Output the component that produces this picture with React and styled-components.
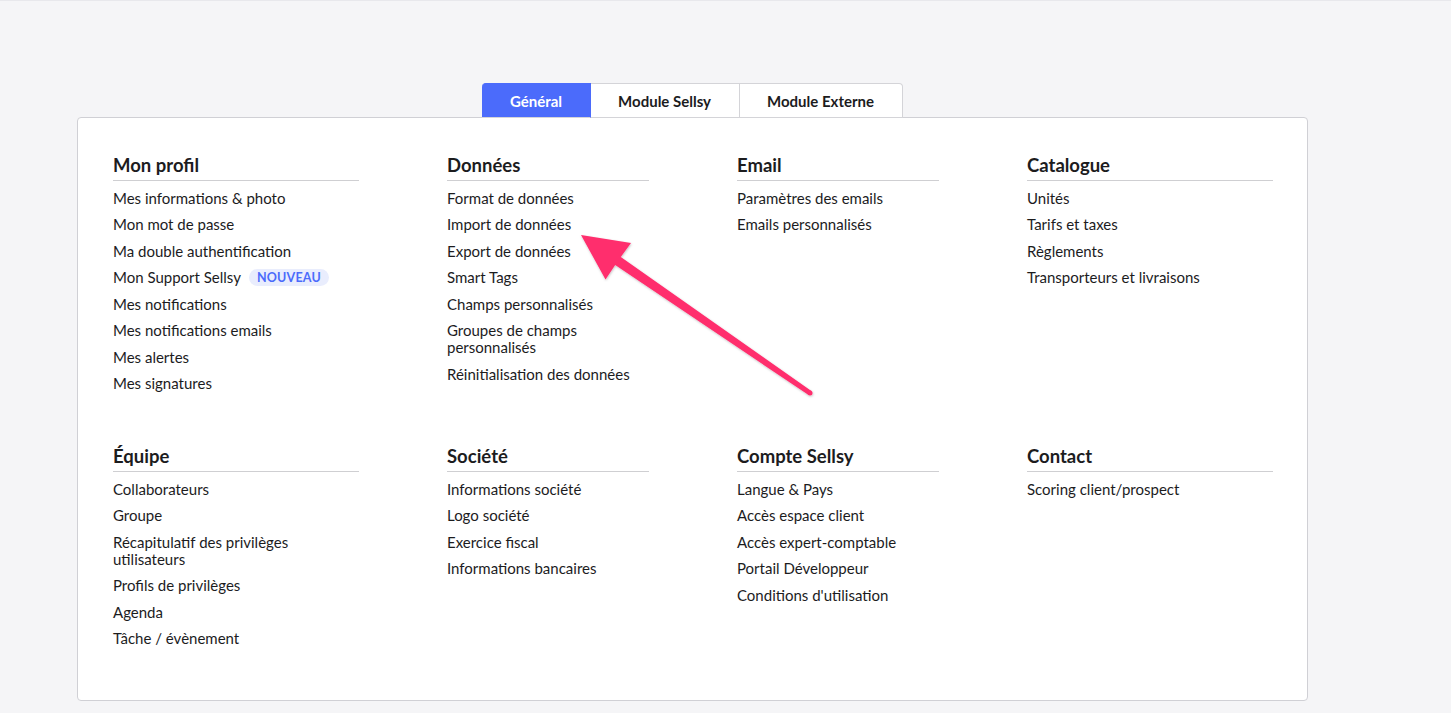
import React from "react";
import styled, { createGlobalStyle } from "styled-components";

const GlobalStyle = createGlobalStyle`
    html, body {
        margin: 0;
        padding: 0;
        background: #f5f5f7;
    }
    body {
        font-family: Lato, "Open Sans", Arial, sans-serif;
        color: #1c1c1e;
    }
`;

const sections = [
    {
        title: "Mon profil",
        width: 246,
        items: [
            "Mes informations & photo",
            "Mon mot de passe",
            "Ma double authentification",
            { label: "Mon Support Sellsy", badge: "NOUVEAU" },
            "Mes notifications",
            "Mes notifications emails",
            "Mes alertes",
            "Mes signatures",
        ],
    },
    {
        title: "Données",
        width: 202,
        items: [
            "Format de données",
            "Import de données",
            "Export de données",
            "Smart Tags",
            "Champs personnalisés",
            "Groupes de champs personnalisés",
            "Réinitialisation des données",
        ],
    },
    {
        title: "Email",
        width: 202,
        items: ["Paramètres des emails", "Emails personnalisés"],
    },
    {
        title: "Catalogue",
        width: 246,
        items: ["Unités", "Tarifs et taxes", "Règlements", "Transporteurs et livraisons"],
    },
    {
        title: "Équipe",
        width: 246,
        items: [
            "Collaborateurs",
            "Groupe",
            "Récapitulatif des privilèges utilisateurs",
            "Profils de privilèges",
            "Agenda",
            "Tâche / évènement",
        ],
    },
    {
        title: "Société",
        width: 202,
        items: ["Informations société", "Logo société", "Exercice fiscal", "Informations bancaires"],
    },
    {
        title: "Compte Sellsy",
        width: 202,
        items: [
            "Langue & Pays",
            "Accès espace client",
            "Accès expert-comptable",
            "Portail Développeur",
            "Conditions d'utilisation",
        ],
    },
    {
        title: "Contact",
        width: 246,
        items: ["Scoring client/prospect"],
    },
];

const tabs = ["Général", "Module Sellsy", "Module Externe"];

function Arrow() {
    return (
        <ArrowLayer width="1451" height="713" viewBox="0 0 1451 713">
            <defs>
                <filter id="shade" x="-10%" y="-10%" width="120%" height="120%">
                    <feDropShadow dx="0.5" dy="1" stdDeviation="0.8" floodColor="#000" floodOpacity="0.25" />
                </filter>
            </defs>
            <g filter="url(#shade)" fill="#ff2e6d">
                <polygon points="581,234 631,242 620.8,255.9 811.4,389.9 808.6,394.1 615.2,264.1 605.5,278.5" />
                <circle cx="810" cy="392" r="2.5" />
            </g>
        </ArrowLayer>
    );
}

function App() {
    return (
        <>
            <GlobalStyle />
            <Page>
                <Wrapper>
                    <TabBar>
                        {tabs.map((t, i) => (
                            <Tab key={t} $active={i === 0}>
                                {t}
                            </Tab>
                        ))}
                    </TabBar>
                    <Card>
                        {sections.map((s) => (
                            <Section key={s.title} $width={s.width}>
                                <Heading>{s.title}</Heading>
                                <List>
                                    {s.items.map((item) =>
                                        typeof item === "string" ? (
                                            <Item key={item}>{item}</Item>
                                        ) : (
                                            <Item key={item.label}>
                                                {item.label}
                                                <Badge>{item.badge}</Badge>
                                            </Item>
                                        )
                                    )}
                                </List>
                            </Section>
                        ))}
                    </Card>
                </Wrapper>
                <Arrow />
            </Page>
        </>
    );
}

const Page = styled.div`
    position: relative;
    min-height: 713px;
    box-sizing: border-box;
    padding-top: 82px;
    border-top: 1px solid #e8e8ec;
`;

const Wrapper = styled.div`
    width: 1231px;
    margin-left: 77px;
    display: flex;
    flex-direction: column;
    align-items: center;
`;

const TabBar = styled.div`
    display: flex;
    position: relative;
    z-index: 1;
    margin-bottom: -1px;
`;

const Tab = styled.div`
    height: 35px;
    box-sizing: border-box;
    padding: 0 27.5px;
    display: flex;
    align-items: center;
    font-size: 15px;
    font-weight: 700;
    color: ${(p) => (p.$active ? "#ffffff" : "#1c1c1e")};
    background: ${(p) => (p.$active ? "#4b6bfb" : "#ffffff")};
    border: 1px solid ${(p) => (p.$active ? "#4b6bfb" : "#d4d4d8")};
    border-left: none;
    border-bottom: 1px solid #d4d4d8;
    &:first-child {
        border-top-left-radius: 4px;
    }
    &:last-child {
        border-top-right-radius: 4px;
    }
`;

const Card = styled.div`
    width: 100%;
    box-sizing: border-box;
    background: #ffffff;
    border: 1px solid #d0d0d5;
    border-radius: 4px;
    padding: 36px 35px 53px 35px;
    display: grid;
    grid-template-columns: 246px 202px 202px 246px;
    column-gap: 88px;
    row-gap: 53px;
`;

const Section = styled.div`
    width: ${(p) => p.$width}px;
`;

const Heading = styled.h3`
    margin: 0;
    font-size: 18.5px;
    line-height: 22px;
    font-weight: 700;
    padding-bottom: 4px;
    border-bottom: 1px solid #cfcfd2;
`;

const List = styled.div`
    display: flex;
    flex-direction: column;
    gap: 9.5px;
    margin-top: 8.5px;
`;

const Item = styled.div`
    font-size: 15px;
    line-height: 17px;
    color: #1c1c1e;
    display: flex;
    align-items: center;
`;

const Badge = styled.span`
    margin-left: 8px;
    padding: 0 8px;
    height: 17px;
    line-height: 17px;
    border-radius: 9px;
    background: #e9edfd;
    color: #4b6bfb;
    font-size: 12.5px;
    font-weight: 700;
    letter-spacing: 0.2px;
`;

const ArrowLayer = styled.svg`
    position: absolute;
    left: 0;
    top: 0;
    pointer-events: none;
`;

export default App;
